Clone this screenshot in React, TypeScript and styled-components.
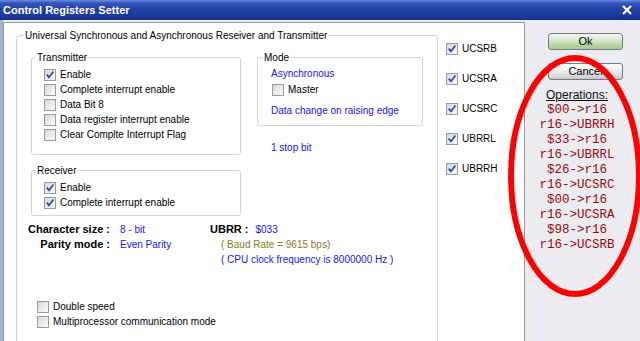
import React from "react";
import styled, { createGlobalStyle } from "styled-components";

const Global = createGlobalStyle`
  html, body { margin: 0; padding: 0; background: #ecebf0; }
  body { font-family: "Liberation Sans", Arial, sans-serif; font-size: 10px; color: #000; }
  * { box-sizing: border-box; }
`;

const Window = styled.div`
  position: relative;
  width: 640px;
  height: 341px;
  overflow: hidden;
  display: flex;
  flex-direction: column;
  background: #ecebf0;
`;

const TitleBar = styled.div`
  height: 20px;
  flex: none;
  display: flex;
  align-items: center;
  justify-content: space-between;
  padding: 0 8px 0 3px;
  background: linear-gradient(to bottom, #6d8fe0 0px, #3456bb 3px, #2343a8 9px, #1b3b9d 15px, #14328c 20px);
  color: #fff;
  font-weight: bold;
  font-size: 11px;
`;

const Body = styled.div`
  flex: 1;
  display: flex;
  padding-top: 2px;
  border-left: 3px solid #a4b1d6;
  min-height: 0;
`;

const LeftPanel = styled.div`
  width: 522px;
  flex: none;
  background: #fff;
  border: 1px solid #919b9c;
  border-bottom: none;
  display: flex;
  align-items: flex-start;
`;

const GroupBox = styled.div<{ $w: number; $mt?: number }>`
  width: ${(p) => p.$w}px;
  margin-top: ${(p) => p.$mt ?? 0}px;
  border: 1px solid #d0d5d8;
  border-radius: 3px;
  flex: none;
`;

const GroupTitle = styled.div<{ $x: number }>`
  width: fit-content;
  margin: -7px 0 0 ${(p) => p.$x}px;
  padding: 0 1px;
  background: #fff;
  line-height: 13px;
  white-space: nowrap;
`;

const GroupBody = styled.div<{ $pad: string }>`
  padding: ${(p) => p.$pad};
  display: flex;
  flex-direction: column;
`;

const BigGroup = styled(GroupBox)`
  margin-left: 12px;
  height: 360px;
`;

const TopGrid = styled.div`
  display: grid;
  grid-template-columns: 210px 166px;
  column-gap: 16px;
  align-items: start;
  margin: 15px 0 0 6px;
`;

const Column = styled.div`
  display: flex;
  flex-direction: column;
`;

const Row = styled.label<{ $mt?: number; $ml?: number }>`
  display: flex;
  align-items: center;
  height: 15px;
  gap: 4px;
  margin-top: ${(p) => p.$mt ?? 0}px;
  margin-left: ${(p) => p.$ml ?? 0}px;
  white-space: nowrap;
`;

const BlueText = styled.div<{ $mt?: number; $ml?: number }>`
  color: #1414ee;
  line-height: 15px;
  height: 15px;
  white-space: nowrap;
  margin-top: ${(p) => p.$mt ?? 0}px;
  margin-left: ${(p) => p.$ml ?? 0}px;
`;

const Box = styled.span`
  width: 12px;
  height: 12px;
  flex: none;
  border: 1px solid #9c9c9c;
  background: linear-gradient(135deg, #d6d6d0 0%, #ececea 55%, #fbfbfa 100%);
  display: flex;
  align-items: center;
  justify-content: center;
`;

const Check = ({ on }: { on?: boolean }) => (
  <Box>
    {on && (
      <svg width="10" height="10" viewBox="0 0 10 10">
        <path d="M1.8 4.6 L4 7.4 L8.4 1.6" fill="none" stroke="#2446c0" strokeWidth="1.7" />
      </svg>
    )}
  </Box>
);

const Info = styled.div`
  display: grid;
  grid-template-columns: 85px 80px auto;
  column-gap: 10px;
  grid-auto-rows: 15px;
  line-height: 15px;
  margin-top: 6px;
  white-space: nowrap;
`;

const Label = styled.div`
  font-weight: bold;
  font-size: 11px;
  text-align: right;
`;

const Value = styled.div<{ $color?: string; $ml?: number }>`
  color: ${(p) => p.$color ?? "#1414ee"};
  margin-left: ${(p) => p.$ml ?? 0}px;
`;

const Ubrr = styled.div`
  display: flex;
  gap: 7px;
`;

const UbrrLabel = styled.span`
  font-weight: bold;
  font-size: 11px;
`;

const BottomChecks = styled.div`
  margin: 32px 0 0 12px;
  display: flex;
  flex-direction: column;
`;

const RegColumn = styled.div`
  margin-left: 8px;
  padding-top: 18px;
  display: flex;
  flex-direction: column;
  gap: 15px;
`;

const RightPanel = styled.div`
  flex: 1;
  display: flex;
  flex-direction: column;
  padding-right: 11px;
`;

const Button = styled.button<{ $ok?: boolean; $mt: number }>`
  width: 75px;
  height: 17px;
  margin: ${(p) => p.$mt}px 0 0 23px;
  padding: 0;
  border: 1px solid #6f7d8a;
  border-radius: 3px;
  font-family: "Liberation Sans", Arial, sans-serif;
  font-size: 11px;
  line-height: 15px;
  color: #000;
  background: ${(p) =>
    p.$ok
      ? "linear-gradient(to bottom, #f2f7ee 0%, #dbe9cf 40%, #bcd6a6 70%, #a8c98e 100%)"
      : "linear-gradient(to bottom, #ffffff 0%, #f1f1f1 40%, #dcdcdc 75%, #c6c6c6 100%)"};
`;

const OpsTitle = styled.div`
  margin-top: 8px;
  text-align: center;
  font-size: 12px;
  line-height: 15px;
  text-decoration: underline;
  color: #111;
`;

const OpsLine = styled.div`
  text-align: center;
  font-family: "Liberation Mono", "Courier New", monospace;
  font-size: 12.5px;
  line-height: 15px;
  color: #980c0c;
  white-space: pre;
`;

const Circle = styled.svg`
  position: absolute;
  left: 505px;
  top: 52px;
  pointer-events: none;
`;

const ops = [
  "$00->r16",
  "r16->UBRRH",
  "$33->r16",
  "r16->UBRRL",
  "$26->r16",
  "r16->UCSRC",
  "$00->r16",
  "r16->UCSRA",
  "$98->r16",
  "r16->UCSRB",
];

const regs = ["UCSRB", "UCSRA", "UCSRC", "UBRRL", "UBRRH"];

export default function App() {
  return (
    <>
      <Global />
      <Window>
        <TitleBar>
          <span>Control Registers Setter</span>
          <svg width="10" height="10" viewBox="0 0 10 10">
            <path d="M1 1 L9 9 M9 1 L1 9" stroke="#fff" strokeWidth="2.2" />
          </svg>
        </TitleBar>
        <Body>
          <LeftPanel>
            <BigGroup $w={422} $mt={12}>
              <GroupTitle $x={7}>Universal Synchronous and Asynchronous Reseiver and Transmitter</GroupTitle>
              <GroupBody $pad="0 0 0 8px">
                <TopGrid>
                  <Column>
                    <GroupBox $w={210}>
                      <GroupTitle $x={4}>Transmitter</GroupTitle>
                      <GroupBody $pad="3px 0 12px 12px">
                        <Row><Check on />Enable</Row>
                        <Row><Check />Complete interrupt enable</Row>
                        <Row><Check />Data Bit 8</Row>
                        <Row><Check />Data register interrupt enable</Row>
                        <Row><Check />Clear Complte Interrupt Flag</Row>
                      </GroupBody>
                    </GroupBox>
                    <GroupBox $w={210} $mt={15}>
                      <GroupTitle $x={4}>Receiver</GroupTitle>
                      <GroupBody $pad="3px 0 5px 12px">
                        <Row><Check on />Enable</Row>
                        <Row><Check on />Complete interrupt enable</Row>
                      </GroupBody>
                    </GroupBox>
                  </Column>
                  <Column>
                    <GroupBox $w={166}>
                      <GroupTitle $x={5}>Mode</GroupTitle>
                      <GroupBody $pad="2px 0 7px 13px">
                        <BlueText>Asynchronous</BlueText>
                        <Row $mt={1} $ml={1}><Check />Master</Row>
                        <BlueText $mt={6}>Data change on raising edge</BlueText>
                      </GroupBody>
                    </GroupBox>
                    <BlueText $mt={14} $ml={14}>1 stop bit</BlueText>
                  </Column>
                </TopGrid>
                <Info>
                  <Label>Character size :</Label>
                  <Value>8 - bit</Value>
                  <Ubrr>
                    <UbrrLabel>UBRR :</UbrrLabel>
                    <Value>$033</Value>
                  </Ubrr>
                  <Label>Parity mode :</Label>
                  <Value>Even Parity</Value>
                  <Value $color="#8f7a25" $ml={11}>( Baud Rate = 9615 bps)</Value>
                  <span />
                  <span />
                  <Value $ml={11}>( CPU clock frequency is 8000000 Hz )</Value>
                </Info>
                <BottomChecks>
                  <Row><Check />Double speed</Row>
                  <Row><Check />Multiprocessor communication mode</Row>
                </BottomChecks>
              </GroupBody>
            </BigGroup>
            <RegColumn>
              {regs.map((r) => (
                <Row key={r}>
                  <Check on />
                  {r}
                </Row>
              ))}
            </RegColumn>
          </LeftPanel>
          <RightPanel>
            <Button $ok $mt={11}>Ok</Button>
            <Button $mt={13}>Cancel</Button>
            <OpsTitle>Operations:</OpsTitle>
            {ops.map((o, i) => (
              <OpsLine key={i}>{o}</OpsLine>
            ))}
          </RightPanel>
        </Body>
        <Circle width="140" height="250" viewBox="0 0 140 250">
          <ellipse cx="70" cy="124" rx="64" ry="118" fill="none" stroke="#ff0000" strokeWidth="6" />
        </Circle>
      </Window>
    </>
  );
}
